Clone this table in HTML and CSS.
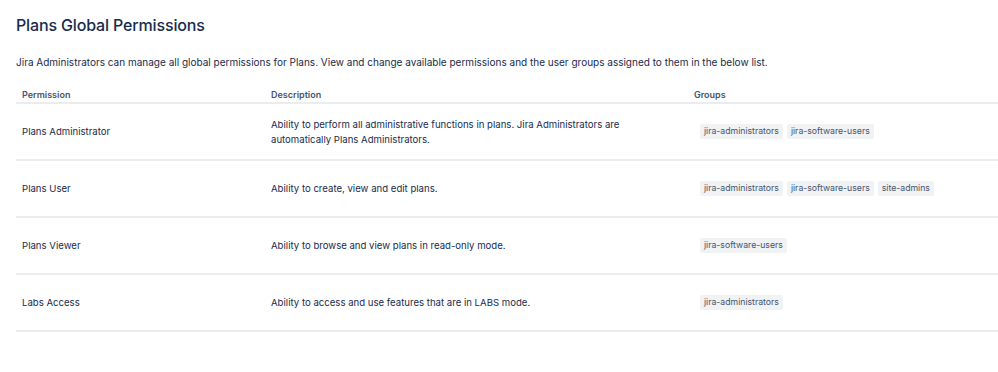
FILE: index.html
```html
<!DOCTYPE html>
<html>
<head>
<meta charset="utf-8">
<link rel="stylesheet" href="styles.css">
</head>
<body>
<div class="page">
  <h1 class="title">Plans Global Permissions</h1>
  <p class="intro">Jira Administrators can manage all global permissions for Plans. View and change available permissions and the user groups assigned to them in the below list.</p>
  <div class="table">
    <div class="row head">
      <div class="cell c1">Permission</div>
      <div class="cell c2">Description</div>
      <div class="cell c3">Groups</div>
    </div>
    <div class="row">
      <div class="cell c1">Plans Administrator</div>
      <div class="cell c2">Ability to perform all administrative functions in plans. Jira Administrators are automatically Plans Administrators.</div>
      <div class="cell c3"><div class="tags"><span class="tag">jira-administrators</span><span class="tag">jira-software-users</span></div></div>
    </div>
    <div class="row">
      <div class="cell c1">Plans User</div>
      <div class="cell c2">Ability to create, view and edit plans.</div>
      <div class="cell c3"><div class="tags"><span class="tag">jira-administrators</span><span class="tag">jira-software-users</span><span class="tag">site-admins</span></div></div>
    </div>
    <div class="row">
      <div class="cell c1">Plans Viewer</div>
      <div class="cell c2">Ability to browse and view plans in read-only mode.</div>
      <div class="cell c3"><div class="tags"><span class="tag">jira-software-users</span></div></div>
    </div>
    <div class="row">
      <div class="cell c1">Labs Access</div>
      <div class="cell c2">Ability to access and use features that are in LABS mode.</div>
      <div class="cell c3"><div class="tags"><span class="tag">jira-administrators</span></div></div>
    </div>
  </div>
</div>
</body>
</html>
```

FILE: styles.css
```css
html, body {
  margin: 0;
  padding: 0;
  background: #ffffff;
}
body {
  font-family: Inter, "Noto Sans", sans-serif;
  color: #172b4d;
}
.page {
  padding: 13px 0 0 16px;
}
.title {
  margin: 0;
  font-size: 16px;
  font-weight: 500;
  line-height: 24px;
  color: #172b4d;
  letter-spacing: -0.15px;
}
.intro {
  margin: 17px 0 0 0;
  font-size: 10px;
  line-height: 16px;
  color: #172b4d;
}
.table {
  margin-top: 18px;
  width: 982px;
}
.row {
  display: flex;
  align-items: center;
  min-height: 55px;
  border-bottom: 2px solid #ebecf0;
}
.row.head {
  min-height: 0;
  height: 14px;
  align-items: flex-start;
  font-weight: 600;
  color: #44546f;
}
.cell {
  padding: 0 6px;
  box-sizing: border-box;
  font-size: 9.6px;
  line-height: 15px;
}
.head .cell {
  font-size: 9px;
  line-height: 14px;
}
.c1 { width: 249px; }
.c2 { width: 423px; padding-right: 40px; }
.c3 { width: 310px; }
.tags {
  display: flex;
  gap: 4px;
  padding-left: 6px;
}
.tag {
  background: #f1f2f4;
  color: #44546f;
  font-size: 8.7px;
  line-height: 15px;
  padding: 0 4px;
  border-radius: 2px;
}
```
